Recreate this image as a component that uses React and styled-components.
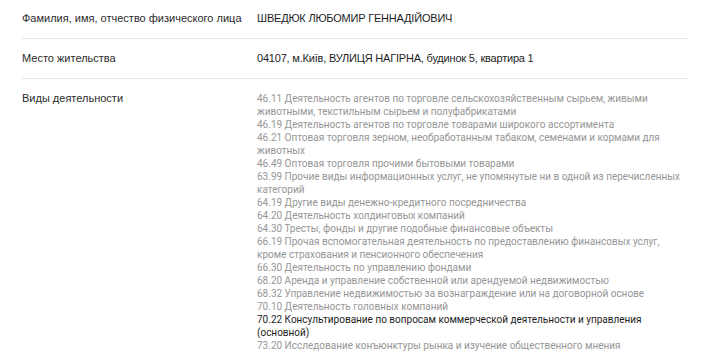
import React from "react";
import styled, { createGlobalStyle } from "styled-components";

const Global = createGlobalStyle`
  html, body { margin: 0; padding: 0; background: #fff; }
  body { font-family: "Liberation Sans", Arial, sans-serif; }
`;

const Table = styled.div`
  padding: 0 21px 0 22px;
  width: 667px;
`;

const Row = styled.div`
  display: grid;
  grid-template-columns: 235px 1fr;
  padding: ${(p) => (p.$first ? "12px" : "13px")} 0 13px;
  border-bottom: ${(p) => (p.$last ? "none" : "1px solid #e6e6e6")};
  font-size: 11px;
  line-height: 13px;
`;

const Label = styled.div`
  color: #2b2b2b;
`;

const Value = styled.div`
  color: #1e1e1e;
  letter-spacing: -0.2px;
`;

const List = styled.div`
  display: flex;
  flex-direction: column;
  font-family: Roboto, "Noto Sans", sans-serif;
  font-size: 10px;
`;

const Item = styled.div`
  color: ${(p) => (p.$main ? "#1e1e1e" : "#969696")};
`;

const activities = [
  ["46.11", "Деятельность агентов по торговле сельскохозяйственным сырьем, живыми животными, текстильным сырьем и полуфабрикатами"],
  ["46.19", "Деятельность агентов по торговле товарами широкого ассортимента"],
  ["46.21", "Оптовая торговля зерном, необработанным табаком, семенами и кормами для животных"],
  ["46.49", "Оптовая торговля прочими бытовыми товарами"],
  ["63.99", "Прочие виды информационных услуг, не упомянутые ни в одной из перечисленных категорий"],
  ["64.19", "Другие виды денежно-кредитного посредничества"],
  ["64.20", "Деятельность холдинговых компаний"],
  ["64.30", "Тресты, фонды и другие подобные финансовые объекты"],
  ["66.19", "Прочая вспомогательная деятельность по предоставлению финансовых услуг, кроме страхования и пенсионного обеспечения"],
  ["66.30", "Деятельность по управлению фондами"],
  ["68.20", "Аренда и управление собственной или арендуемой недвижимостью"],
  ["68.32", "Управление недвижимостью за вознаграждение или на договорной основе"],
  ["70.10", "Деятельность головных компаний"],
  ["70.22", "Консультирование по вопросам коммерческой деятельности и управления (основной)", true],
  ["73.20", "Исследование конъюнктуры рынка и изучение общественного мнения"],
];

export default function App() {
  return (
    <>
      <Global />
      <Table>
        <Row $first>
          <Label>Фамилия, имя, отчество физического лица</Label>
          <Value>ШВЕДЮК ЛЮБОМИР ГЕННАДІЙОВИЧ</Value>
        </Row>
        <Row>
          <Label>Место жительства</Label>
          <Value>04107, м.Київ, ВУЛИЦЯ НАГІРНА, будинок 5, квартира 1</Value>
        </Row>
        <Row $last>
          <Label>Виды деятельности</Label>
          <List>
            {activities.map(([code, text, main]) => (
              <Item key={code} $main={main}>
                {code} {text}
              </Item>
            ))}
          </List>
        </Row>
      </Table>
    </>
  );
}
